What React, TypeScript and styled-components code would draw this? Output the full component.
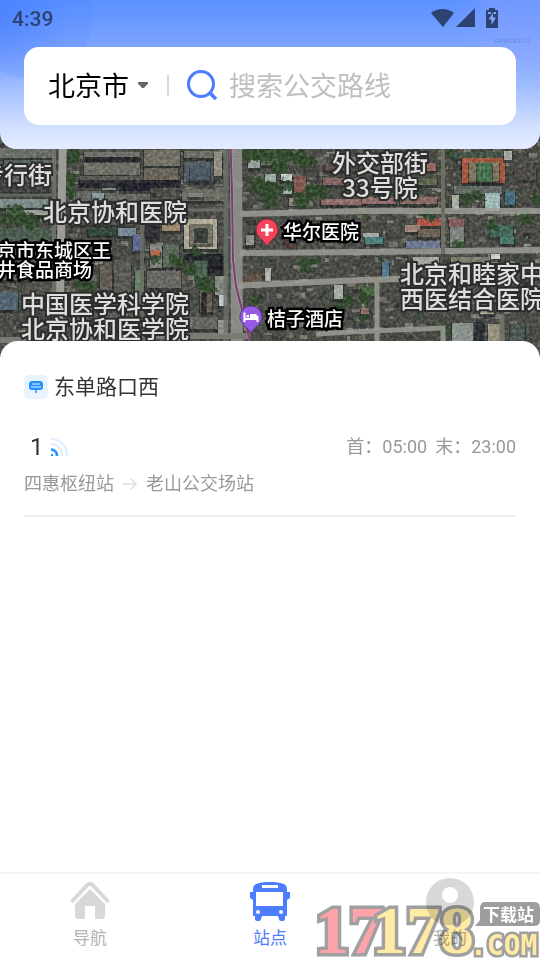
import React from "react";
import styled, { createGlobalStyle } from "styled-components";

const GlobalStyle = createGlobalStyle`
  * { box-sizing: border-box; }
  html, body { margin: 0; padding: 0; background: #fff; }
  body { font-family: Roboto, "Noto Sans CJK SC", sans-serif; color: #333; }
`;

const Page = styled.div`
  position: relative;
  display: flex;
  flex-direction: column;
  min-height: 100vh;
  overflow: hidden;
  background: #fff;
`;

/* ---------- header ---------- */

const Header = styled.header`
  position: relative;
  z-index: 2;
  padding: 0 24px 24px;
  border-radius: 0 0 16px 16px;
  background:
    radial-gradient(circle at 30px 16px, rgba(62, 120, 255, 0.14) 0 62px, transparent 64px),
    radial-gradient(circle at 0 20px, rgba(50, 110, 255, 0.4) 0, transparent 70px),
    radial-gradient(circle at 100% 0, rgba(150, 165, 255, 0.35) 0 45px, transparent 90px),
    linear-gradient(180deg, #5a91ff 0, #78a1ff 40px, #a3c0ff 90px, #d3e1ff 128px, #e4ecff 100%);
`;

const StatusBar = styled.div`
  display: flex;
  align-items: center;
  justify-content: space-between;
  height: 38px;
  margin: 0 17px 9px -12px;
  color: #2b4273;
`;

const Clock = styled.time`
  font-size: 21px;
  font-weight: 500;
`;

const StatusIcons = styled.div`
  display: flex;
  align-items: center;
  padding-bottom: 3px;
`;

const BuildTag = styled.small`
  position: absolute;
  top: 36px;
  right: 10px;
  font-size: 8px;
  line-height: 10px;
  color: #668ee2;
`;

const SearchBar = styled.form`
  display: flex;
  align-items: center;
  height: 78px;
  padding: 0 24px 2px;
  border-radius: 15px;
  background: #fff;
`;

const CityPicker = styled.label`
  display: flex;
  align-items: center;
  gap: 8px;
`;

const CitySelect = styled.select`
  appearance: none;
  border: 0;
  padding: 0;
  background: transparent;
  color: #000;
  font: 400 27px/40px "Noto Sans CJK SC", sans-serif;
`;

const Divider = styled.span`
  width: 2px;
  height: 21px;
  margin: 0 17px 0 18px;
  background: #d9d9d9;
`;

const SearchInput = styled.input`
  flex: 1;
  min-width: 0;
  margin-left: 11px;
  padding: 0;
  border: 0;
  outline: 0;
  background: transparent;
  color: #000;
  font: 400 27px/40px "Noto Sans CJK SC", sans-serif;
  &::placeholder { color: #bfbfbf; opacity: 1; }
`;

/* ---------- map ---------- */

const MapArea = styled.section`
  position: relative;
  height: 224px;
  margin: -16px 0;
  overflow: hidden;
  background: #4c4e47;
`;

const MapDrawing = styled.svg`
  display: block;
  width: 100%;
  height: 100%;
`;

const MapLabel = styled.span<{ $x: number; $y: number; $poi?: boolean }>`
  position: absolute;
  left: ${(p) => p.$x}px;
  top: ${(p) => p.$y}px;
  white-space: pre;
  text-align: ${(p) => (p.$poi ? "left" : "center")};
  font-family: "Noto Sans CJK SC", sans-serif;
  font-weight: 500;
  font-size: ${(p) => (p.$poi ? 19 : 24)}px;
  line-height: ${(p) => (p.$poi ? 19 : 25)}px;
  color: ${(p) => (p.$poi ? "#fff" : "#dedede")};
  -webkit-text-stroke: ${(p) => (p.$poi ? "5px #000" : "4px #2c2c2c")};
  paint-order: stroke fill;
`;

const MapPin = styled.svg<{ $x: number; $y: number }>`
  position: absolute;
  left: ${(p) => p.$x}px;
  top: ${(p) => p.$y}px;
`;

type Block = [number, number, number, number, string];

const buildings: Block[] = [
  [0, 148, 54, 10, "#6f756f"], [4, 160, 50, 22, "#626c6a"], [0, 184, 54, 8, "#3f4340"],
  [0, 199, 50, 9, "#849593"], [6, 210, 42, 5, "#a7aea3"], [0, 228, 54, 16, "#4b6051"],
  [84, 152, 56, 5, "#777a74"], [84, 163, 56, 12, "#77756d"], [80, 176, 100, 7, "#5e5e58"],
  [144, 150, 36, 16, "#7b786e"], [144, 168, 34, 12, "#6f6a60"], [76, 191, 74, 10, "#6d6e68"],
  [92, 193, 12, 7, "#93abb1"], [102, 183, 14, 7, "#8f9598"], [120, 186, 30, 5, "#1f1f2b"],
  [72, 213, 62, 12, "#5f615c"], [88, 228, 30, 7, "#30483c"], [118, 228, 18, 8, "#8394a5"],
  [133, 234, 10, 17, "#6570a0"], [135, 270, 9, 34, "#718b75"], [146, 222, 13, 17, "#292932"],
  [162, 222, 18, 9, "#ad9879"], [150, 244, 12, 24, "#8e918b"], [151, 250, 9, 6, "#c86e4b"],
  [163, 245, 16, 22, "#61705e"], [147, 271, 34, 17, "#6f6e67"], [100, 265, 12, 25, "#665e58"],
  [114, 260, 17, 38, "#5e5d58"], [0, 266, 30, 14, "#626964"], [0, 292, 18, 18, "#536a7a"],
  [22, 283, 30, 12, "#54524d"], [68, 300, 24, 14, "#6a6c66"], [94, 313, 34, 18, "#5e625c"],
  [184, 151, 42, 7, "#74736d"], [184, 162, 30, 20, "#59616c"], [190, 166, 20, 14, "#4e5b69"],
  [214, 152, 8, 24, "#a19d90"], [182, 189, 42, 12, "#706e66"], [188, 193, 15, 4, "#aaa89e"],
  [184, 219, 33, 30, "#c5bea8"], [190, 224, 22, 20, "#7d7c71"], [195, 228, 12, 12, "#343d38"],
  [184, 254, 42, 6, "#1f2226"], [195, 261, 13, 18, "#4d6652"], [208, 260, 16, 13, "#1b1d22"],
  [215, 276, 12, 19, "#929791"], [219, 295, 8, 11, "#dadcd8"], [200, 290, 12, 22, "#6d6258"],
  [202, 292, 4, 23, "#262424"], [182, 317, 36, 12, "#6c6d68"], [218, 320, 10, 14, "#a0a19b"],
  [248, 160, 12, 8, "#a9b2ae"], [265, 174, 11, 8, "#a7bdb8"], [281, 174, 11, 7, "#d4ded9"],
  [283, 185, 9, 9, "#b3c4be"], [261, 157, 18, 8, "#76766b"], [294, 176, 12, 17, "#8d5d53"],
  [289, 198, 10, 8, "#9e9480"], [323, 178, 40, 7, "#91686c"], [321, 199, 42, 6, "#9b7172"],
  [324, 163, 34, 8, "#5d5048"], [246, 235, 8, 10, "#9d9e99"], [265, 268, 6, 13, "#c0c0b8"],
  [245, 274, 17, 10, "#6d564c"], [334, 285, 9, 14, "#b9beb5"], [284, 240, 12, 9, "#553e39"],
  [362, 197, 34, 7, "#a17476"], [400, 197, 37, 7, "#94716a"], [410, 163, 26, 8, "#a56d66"],
  [404, 178, 33, 7, "#61694f"], [363, 164, 33, 6, "#6e5c50"], [453, 152, 47, 6, "#435849"],
  [462, 158, 43, 25, "#b85c42"], [469, 162, 30, 19, "#8a7d64"], [477, 163, 15, 19, "#3c7048"],
  [454, 186, 48, 8, "#68716d"], [485, 193, 15, 18, "#a9cbc9"], [505, 191, 10, 14, "#42748a"],
  [452, 195, 7, 15, "#bcc5bb"], [504, 151, 8, 9, "#bbbbb4"], [514, 168, 22, 12, "#4f4b48"],
  [417, 219, 24, 7, "#c45a49"], [405, 225, 15, 7, "#b29188"], [418, 229, 22, 8, "#76685c"],
  [406, 241, 34, 7, "#7582a0"], [449, 219, 15, 8, "#8f6063"], [450, 227, 14, 20, "#898e89"],
  [490, 225, 23, 12, "#416d5b"], [500, 237, 14, 7, "#4b8271"], [363, 233, 16, 4, "#b6beb8"],
  [365, 237, 18, 7, "#4f8989"], [382, 262, 7, 16, "#547e9c"], [413, 257, 26, 8, "#b8b9b1"],
  [451, 257, 47, 8, "#858a78"], [491, 254, 9, 5, "#e8eae4"], [361, 286, 15, 10, "#4b6842"],
  [361, 308, 8, 6, "#a07571"], [452, 323, 22, 19, "#98a09d"], [488, 324, 12, 18, "#a5a088"],
  [474, 322, 10, 20, "#282c31"], [510, 324, 15, 18, "#4e5a56"], [480, 305, 14, 9, "#beb5a2"],
];

const trees: [number, number, number][] = [
  [72, 156, 8], [71, 178, 6], [70, 192, 6], [16, 214, 10], [30, 221, 8], [8, 221, 7],
  [192, 270, 6], [203, 283, 8], [196, 252, 5], [210, 288, 6], [250, 155, 8], [266, 154, 9],
  [284, 155, 9], [298, 157, 8], [258, 186, 9], [272, 190, 9], [287, 186, 6], [270, 200, 8],
  [300, 200, 8], [312, 192, 8], [322, 192, 7], [280, 167, 8], [310, 163, 6], [376, 190, 7],
  [390, 189, 9], [404, 191, 7], [415, 190, 6], [449, 153, 5], [465, 199, 6], [478, 197, 6],
  [443, 166, 4], [306, 265, 7], [317, 260, 5], [254, 302, 6], [338, 308, 7], [347, 300, 6],
  [365, 299, 6], [364, 318, 5], [443, 329, 7], [536, 200, 5], [526, 218, 7], [532, 275, 5],
  [493, 225, 5], [430, 214, 7], [366, 214, 5], [178, 262, 6], [170, 297, 6], [82, 284, 7],
  [90, 288, 6], [46, 250, 5], [155, 260, 5], [173, 260, 5], [457, 303, 6], [460, 246, 6],
];

const roofTones = ["#6d6c66", "#38383a", "#77756d", "#2d2f31", "#4d5148", "#5a4f49", "#87877f", "#3b4a37", "#45403e", "#9b9a92"];

function scatterRoofs(): Block[] {
  let seed = 4391;
  const next = () => {
    seed = (seed * 16807) % 2147483647;
    return seed / 2147483647;
  };
  const roofs: Block[] = [];
  for (let i = 0; i < 1900; i++) {
    const w = 2 + Math.floor(next() * 8);
    const h = 2 + Math.floor(next() * 4);
    roofs.push([
      Math.floor(next() * 540),
      133 + Math.floor(next() * 224),
      w,
      h,
      roofTones[Math.floor(next() * roofTones.length)],
    ]);
  }
  return roofs;
}

const roofs = scatterRoofs();

function SatelliteMap() {
  return (
    <MapDrawing viewBox="0 133 540 224" preserveAspectRatio="xMidYMid slice" aria-hidden="true">
      <defs>
        <filter id="grain" x="0" y="0" width="100%" height="100%" colorInterpolationFilters="sRGB">
          <feTurbulence type="fractalNoise" baseFrequency="0.3" numOctaves="3" seed="8" />
          <feColorMatrix values="1.8 .4 0 0 -.8  1.7 .5 0 0 -.79  1.6 .4 0 0 -.72  0 0 0 0 .18" />
        </filter>
        <filter id="leaf" x="-10%" y="-10%" width="120%" height="120%">
          <feTurbulence type="fractalNoise" baseFrequency="0.2" numOctaves="2" seed="3" />
          <feDisplacementMap in="SourceGraphic" scale="11" />
        </filter>
        <filter id="soften"><feGaussianBlur stdDeviation="0.6" /></filter>
      </defs>
      <rect y="133" width="540" height="224" fill="#4b4c47" />
      <g filter="url(#soften)">
        {roofs.map(([x, y, w, h, c], i) => <rect key={i} x={x} y={y} width={w} height={h} fill={c} opacity="0.75" />)}
        {buildings.map(([x, y, w, h, c], i) => (
          <g key={i}>
            <rect x={x - 1} y={y + 1} width={w + 2} height={h + 2} fill="#202327" opacity="0.65" />
            <rect x={x} y={y} width={w} height={h} fill={c} />
          </g>
        ))}
        <rect x="78" y="180" width="102" height="8" fill="#1b1b27" opacity="0.8" />
        <rect x="84" y="157" width="56" height="5" fill="#202226" />
        <path d="M480 163v18M484 163v18M488 163v18" stroke="#6b9873" />
        <path d="M487 196h11M487 200h11M487 204h11" stroke="#d6e5e2" />
      </g>
      <g fill="#2c4a27" opacity="0.85" filter="url(#leaf)">
        {trees.map(([x, y, r], i) => <circle key={i} cx={x} cy={y} r={r} />)}
      </g>
      <rect y="133" width="540" height="224" filter="url(#grain)" />
      <g fill="none" stroke="#a0a09b" opacity="0.82" filter="url(#soften)">
        <path d="M63 133L61 240L59 357" strokeWidth="8" stroke="#aeaeaa" />
        <path d="M54 133v224" strokeWidth="4" stroke="#777872" />
        <path d="M236 133L237 357" strokeWidth="12" stroke="#989994" />
        <path d="M226 133V357" strokeWidth="5" stroke="#6c7268" />
        <path d="M240 214L360 211L540 211" strokeWidth="6" />
        <path d="M240 253L360 252L540 250" strokeWidth="6" />
        <path d="M232 286L360 280L400 279" strokeWidth="6" />
        <path d="M377 279V345" strokeWidth="5" />
        <path d="M316 334L370 331L443 328V350" strokeWidth="5" />
        <path d="M443 133V254" strokeWidth="4" stroke="#74746d" />
        <path d="M180 195H226M178 210H226" strokeWidth="3" stroke="#74766e" />
        <path d="M0 340H130M130 336H250" strokeWidth="6" stroke="#85867f" />
        <path d="M0 195H54M70 208H180" strokeWidth="3" stroke="#6c6f68" />
        <path d="M142 225V340" strokeWidth="4" stroke="#6a6d63" />
        <path d="M502 315V357" strokeWidth="5" stroke="#77786f" />
      </g>
      <path d="M230 133L232 190L233 260L236 286L250 341" fill="none" stroke="#e9dfe8" strokeWidth="3" opacity="0.35" />
      <path d="M230 133L232 190L233 260L236 286L250 341" fill="none" stroke="#7d3c70" strokeWidth="2" />
    </MapDrawing>
  );
}

const pinPath = "M12 1C5.900 1 1 5.900 1 12c0 5 4 8 7.500 11.500L12 28l3.500-4.500C19 20 23 17 23 12 23 5.900 18.100 1 12 1Z";

/* ---------- station sheet ---------- */

const Sheet = styled.main`
  position: relative;
  z-index: 2;
  flex: 1;
  padding: 30px 24px;
  border-radius: 18px 18px 0 0;
  background: #fff;
`;

const StationTitle = styled.h1`
  display: flex;
  align-items: center;
  gap: 6px;
  margin: 0 0 33px;
  font: 400 21px/24px "Noto Sans CJK SC", sans-serif;
  color: #333;
`;

const StationBadge = styled.svg`
  margin-top: 4px;
`;

const RouteLink = styled.a`
  display: block;
  padding-bottom: 17px;
  border-bottom: 2px solid #ededed;
  color: #999;
  text-decoration: none;
`;

const RouteHeading = styled.div`
  display: flex;
  align-items: center;
  justify-content: space-between;
  height: 30px;
  margin-bottom: 8px;
  padding-left: 6px;
`;

const RouteName = styled.strong`
  display: flex;
  align-items: center;
  gap: 6px;
  font: 400 24px/30px Roboto, sans-serif;
  color: #333;
`;

const Schedule = styled.span`
  display: flex;
  gap: 8px;
  font-size: 18px;
  line-height: 26px;
`;

const Stops = styled.div`
  display: flex;
  align-items: center;
  gap: 8px;
  font-size: 18px;
  line-height: 28px;
`;

/* ---------- bottom navigation ---------- */

const TabBar = styled.nav`
  display: grid;
  grid-template-columns: repeat(3, 1fr);
  height: 88px;
  border-top: 2px solid #f4f4f4;
  background: #fff;
`;

const Tab = styled.a<{ $active?: boolean }>`
  display: flex;
  flex-direction: column;
  align-items: center;
  padding-top: 3px;
  gap: 1px;
  font-size: 17px;
  line-height: 24px;
  text-decoration: none;
  color: ${(p) => (p.$active ? "#4c7dff" : "#b3b3b3")};
`;

const SiteMark = styled.svg`
  position: absolute;
  z-index: 3;
  right: 0;
  bottom: 0;
  pointer-events: none;
  mix-blend-mode: multiply;
`;

export default function App() {
  return (
    <Page>
      <GlobalStyle />
      <Header>
        <StatusBar>
          <Clock>4:39</Clock>
          <StatusIcons>
            <svg width="25" height="20" viewBox="0 0 25 20" fill="currentColor"><path d="M0 5C7-.4 16-.4 23 5L12 19Z" /></svg>
            <svg width="20" height="20" viewBox="0 0 20 20" fill="currentColor"><path d="M19 0v19H0Z" /></svg>
            <svg width="23" height="20" viewBox="0 0 23 20">
              <path fill="currentColor" d="M13 0h6v2h3v17q0 1-1 1H11q-1 0-1-1V2h3Z" />
              <path fill="#80a8fa" d="M17 5v4.500h3L15.500 17v-5.500H12.500ZM12 4h3v2h-3Zm5.500 0H20v2h-2.500Z" />
            </svg>
          </StatusIcons>
        </StatusBar>
        <BuildTag>d68ca312</BuildTag>
        <SearchBar onSubmit={(e) => e.preventDefault()}>
          <CityPicker>
            <CitySelect aria-label="城市" defaultValue="北京市"><option>北京市</option></CitySelect>
            <svg width="12" height="8" viewBox="0 0 12 8"><path d="M1 1h10v1.500L7 7H5L1 2.500Z" fill="#666" /></svg>
          </CityPicker>
          <Divider />
          <svg width="32" height="32" viewBox="0 0 32 32" fill="none" stroke="#4c7dff" strokeWidth="3">
            <circle cx="15" cy="15" r="12.500" /><path d="M23.500 23.500L30 30" strokeWidth="3.500" />
          </svg>
          <SearchInput type="text" aria-label="搜索公交路线" placeholder="搜索公交路线" />
        </SearchBar>
      </Header>

      <MapArea aria-label="地图">
        <SatelliteMap />
        <MapLabel $x={-20} $y={28}>步行街</MapLabel>
        <MapLabel $x={43} $y={65}>北京协和医院</MapLabel>
        <MapLabel $x={-3} $y={107} $poi>{"京市东城区王\n井食品商场"}</MapLabel>
        <MapLabel $x={21} $y={157}>{"中国医学科学院\n北京协和医学院"}</MapLabel>
        <MapLabel $x={332} $y={16}>{"外交部街\n33号院"}</MapLabel>
        <MapLabel $x={400} $y={127}>{"北京和睦家中\n西医结合医院"}</MapLabel>
        <MapLabel $x={283} $y={88} $poi>华尔医院</MapLabel>
        <MapLabel $x={267} $y={175} $poi>桔子酒店</MapLabel>
        <MapPin $x={255} $y={85} width="24" height="29" viewBox="0 0 24 29">
          <path d={pinPath} fill="#f5435b" stroke="#762734" />
          <path d="M12 6v12M6 12h12" stroke="#fff" strokeWidth="3" />
        </MapPin>
        <MapPin $x={239} $y={172} width="24" height="29" viewBox="0 0 24 29">
          <path d={pinPath} fill="#955be4" stroke="#563488" />
          <path d="M5.500 7.500V17M18.500 17v-6M5.500 14h13" stroke="#fff" strokeWidth="2" fill="none" />
          <path d="M11 9h6l1.500 2v3H11ZM7.500 10h2.500v2.500H7.500Z" fill="#fff" />
        </MapPin>
      </MapArea>

      <Sheet>
        <StationTitle>
          <StationBadge width="24" height="24" viewBox="0 0 24 24">
            <rect width="24" height="24" rx="5" fill="#e8f3ff" />
            <rect x="5" y="6" width="14" height="9" rx="3" fill="#2490ff" />
            <path d="M8 9h8M7 12h10" stroke="#e8f3ff" strokeWidth="1.200" /><path d="M12 15v3" stroke="#2490ff" strokeWidth="1.500" />
          </StationBadge>
          东单路口西
        </StationTitle>
        <RouteLink href="#route-1">
          <RouteHeading>
            <RouteName>
              1
              <svg width="18" height="18" viewBox="0 0 18 18" fill="none" strokeWidth="2">
                <path d="M1 1A16 16 0 0 1 17 18M1 6A11 11 0 0 1 12 18" stroke="#dceeff" />
                <path d="M1 11.500A6 6 0 0 1 7 18" stroke="#2196ff" strokeWidth="2.500" />
                <rect x="1" y="16" width="2" height="2" fill="#2196ff" />
              </svg>
            </RouteName>
            <Schedule><span>首：05:00</span><span>末：23:00</span></Schedule>
          </RouteHeading>
          <Stops>
            <span>四惠枢纽站</span>
            <svg width="16" height="14" viewBox="0 0 16 14" fill="none" stroke="#dedede" strokeWidth="1.500"><path d="M1 7h13M8.500 1.500L14 7l-5.500 5.500" /></svg>
            <span>老山公交场站</span>
          </Stops>
        </RouteLink>
      </Sheet>

      <TabBar>
        <Tab href="#navigate">
          <svg width="48" height="48" viewBox="0 0 48 48">
            <path d="M5.500 25L21.500 8Q24 5.500 26.500 8L42.500 25" fill="none" stroke="#d8d8d8" strokeWidth="4" />
            <path d="M24 12L39 27V38.500Q39 42 35.500 42H29V29H19V42H12.500Q9 42 9 38.500V27Z" fill="#d8d8d8" />
          </svg>
          导航
        </Tab>
        <Tab href="#stations" $active aria-current="page">
          <svg width="48" height="48" viewBox="0 0 48 48" fill="#4c7dff">
            <path fillRule="evenodd" d="M7 12C7 7 12 5 24 5s17 2 17 7v3h3v6l-3 2v16h-2v3q0 2-3 2t-3-2l-1-3H16l-1 3q0 2-3 2t-3-2v-3H7V23l-3-2v-6h3ZM16 8v3h16V8ZM10 15v14h27V15Zm2 18a2 2 0 1 0 0 4 2 2 0 0 0 0-4Zm23 0a2 2 0 1 0 0 4 2 2 0 0 0 0-4Z" />
          </svg>
          站点
        </Tab>
        <Tab href="#profile">
          <svg width="48" height="48" viewBox="0 0 48 48">
            <circle cx="24" cy="25" r="24" fill="#d8d8d8" />
            <circle cx="24" cy="18" r="8" fill="#fff" />
          </svg>
          我的
        </Tab>
      </TabBar>

      <SiteMark width="224" height="64" viewBox="0 0 224 64" role="img" aria-label="17178.com 下载站">
        <g opacity="0.76" stroke="#838383" strokeLinejoin="miter" paintOrder="stroke" fontWeight="700">
          <g fontFamily="'Liberation Serif', serif" fontSize="68" strokeWidth="7">
            <text x="-1" y="57" fill="#ff8790">17</text>
            <text x="56" y="57" fill="#ffe587">178</text>
          </g>
          <text x="154" y="59" fill="#ffe587" fontFamily="'DejaVu Sans Mono', monospace" fontSize="28" strokeWidth="5">.COM</text>
        </g>
        <path d="M169 6H218Q224 6 224 12V24Q224 30 218 30H159L164 24V11Q165 6 169 6Z" fill="#8c8c8c" opacity="0.85" />
        <text x="167" y="25" fill="#fff" fontSize="17" fontWeight="700" fontFamily="'Noto Sans CJK SC', sans-serif">下载站</text>
      </SiteMark>
    </Page>
  );
}
